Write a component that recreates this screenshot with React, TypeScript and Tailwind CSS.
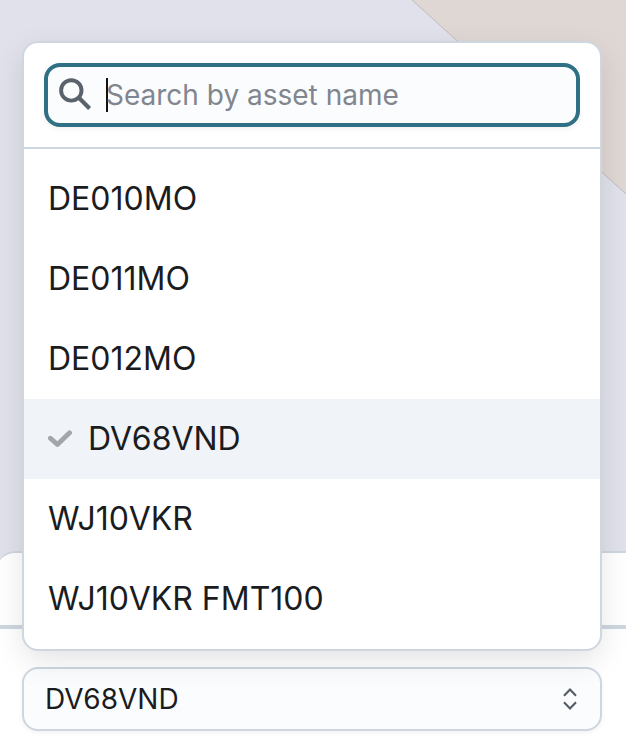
import clsx from 'clsx';

interface Asset {
  id: string;
  name: string;
}

const assets: Asset[] = [
  { id: '1', name: 'DE010MO' },
  { id: '2', name: 'DE011MO' },
  { id: '3', name: 'DE012MO' },
  { id: '4', name: 'DV68VND' },
  { id: '5', name: 'WJ10VKR' },
  { id: '6', name: 'WJ10VKR FMT100' },
];

function SearchIcon() {
  return (
    <svg viewBox="0 0 36 36" className="h-9 w-9 shrink-0" fill="none" stroke="#5a626c">
      <circle cx="15.3" cy="13.4" r="10.2" strokeWidth="3.9" />
      <path d="M22.6 20.6L33.6 31.6" strokeWidth="4.2" />
    </svg>
  );
}

function CheckIcon() {
  return (
    <svg viewBox="0 0 24 24" className="h-6 w-6 shrink-0" fill="none" stroke="#a1a6ab">
      <path d="M2.4 11.2L9.4 17.6L21.6 5.8" strokeWidth="4.8" strokeLinecap="round" strokeLinejoin="round" />
    </svg>
  );
}

function SelectorIcon() {
  return (
    <svg viewBox="0 0 16 24" className="h-6 w-4 shrink-0" fill="none" stroke="#555d67">
      <path d="M2 8.7L8 2.6L14 8.7M2 15.3L8 21.4L14 15.3" strokeWidth="2.2" />
    </svg>
  );
}

function MapBackground() {
  return (
    <svg viewBox="0 0 626 600" className="absolute inset-x-0 top-0 h-[600px] w-full">
      <rect width="626" height="600" fill="#e1e1eb" />
      <path d="M412 0L626 194V0Z" fill="#dfd7d3" />
      <path d="M412 0L626 194" stroke="#b9b2b2" strokeWidth="0.8" />
    </svg>
  );
}

function AssetDropdown({ selected }: { selected: string }) {
  return (
    <div className="absolute inset-x-0 bottom-full z-10 mb-4 overflow-hidden rounded-2xl border-2 border-[#ced7e0] bg-white shadow-[0_10px_32px_-3px_rgba(0,0,0,0.13)]">
      <div className="border-b-2 border-[#ced7e0] p-5">
        <div className="flex h-16 items-center rounded-2xl border-4 border-[#2f7085] bg-[#fbfcfe] pl-2 shadow-[0_2px_6px_rgba(0,0,0,0.06)]">
          <SearchIcon />
          <span className="ml-[14px] h-[34px] w-0.5 bg-[#111214]" />
          <span className="-ml-0.5 text-[28px] leading-none text-[#81868e]">Search by asset name</span>
        </div>
      </div>
      <ul className="py-2.5">
        {assets.map((asset) => (
          <li
            key={asset.id}
            className={clsx(
              'flex h-20 items-center gap-4 px-6 text-[32px] text-[#1b1c1e]',
              asset.name === selected && 'bg-[#f0f3f8]'
            )}
          >
            {asset.name === selected && <CheckIcon />}
            <span>{asset.name}</span>
          </li>
        ))}
      </ul>
    </div>
  );
}

export default function App() {
  const selected = 'DV68VND';

  return (
    <div className="relative h-[746px] overflow-hidden pt-[551px] font-['Inter',sans-serif]">
      <MapBackground />
      {/* Bottom sheet */}
      <div className="relative -ml-1 -mr-8 h-[195px] rounded-t-[20px] border-t-2 border-[#ced7e0] bg-white">
        <div className="h-[76px] border-b-4 border-[#ced7e0]" />
        <div className="pl-[26px] pr-14 pt-[38px]">
          <div className="relative">
            <AssetDropdown selected={selected} />
            <button className="flex h-16 w-full items-center justify-between rounded-2xl border-2 border-[#ced7e0] bg-[#fbfcfe] pl-[21px] pr-[22px] text-[28px] text-[#1b1c1e] shadow-[0_2px_4px_rgba(0,0,0,0.05)]">
              <span>{selected}</span>
              <SelectorIcon />
            </button>
          </div>
        </div>
      </div>
    </div>
  );
}
